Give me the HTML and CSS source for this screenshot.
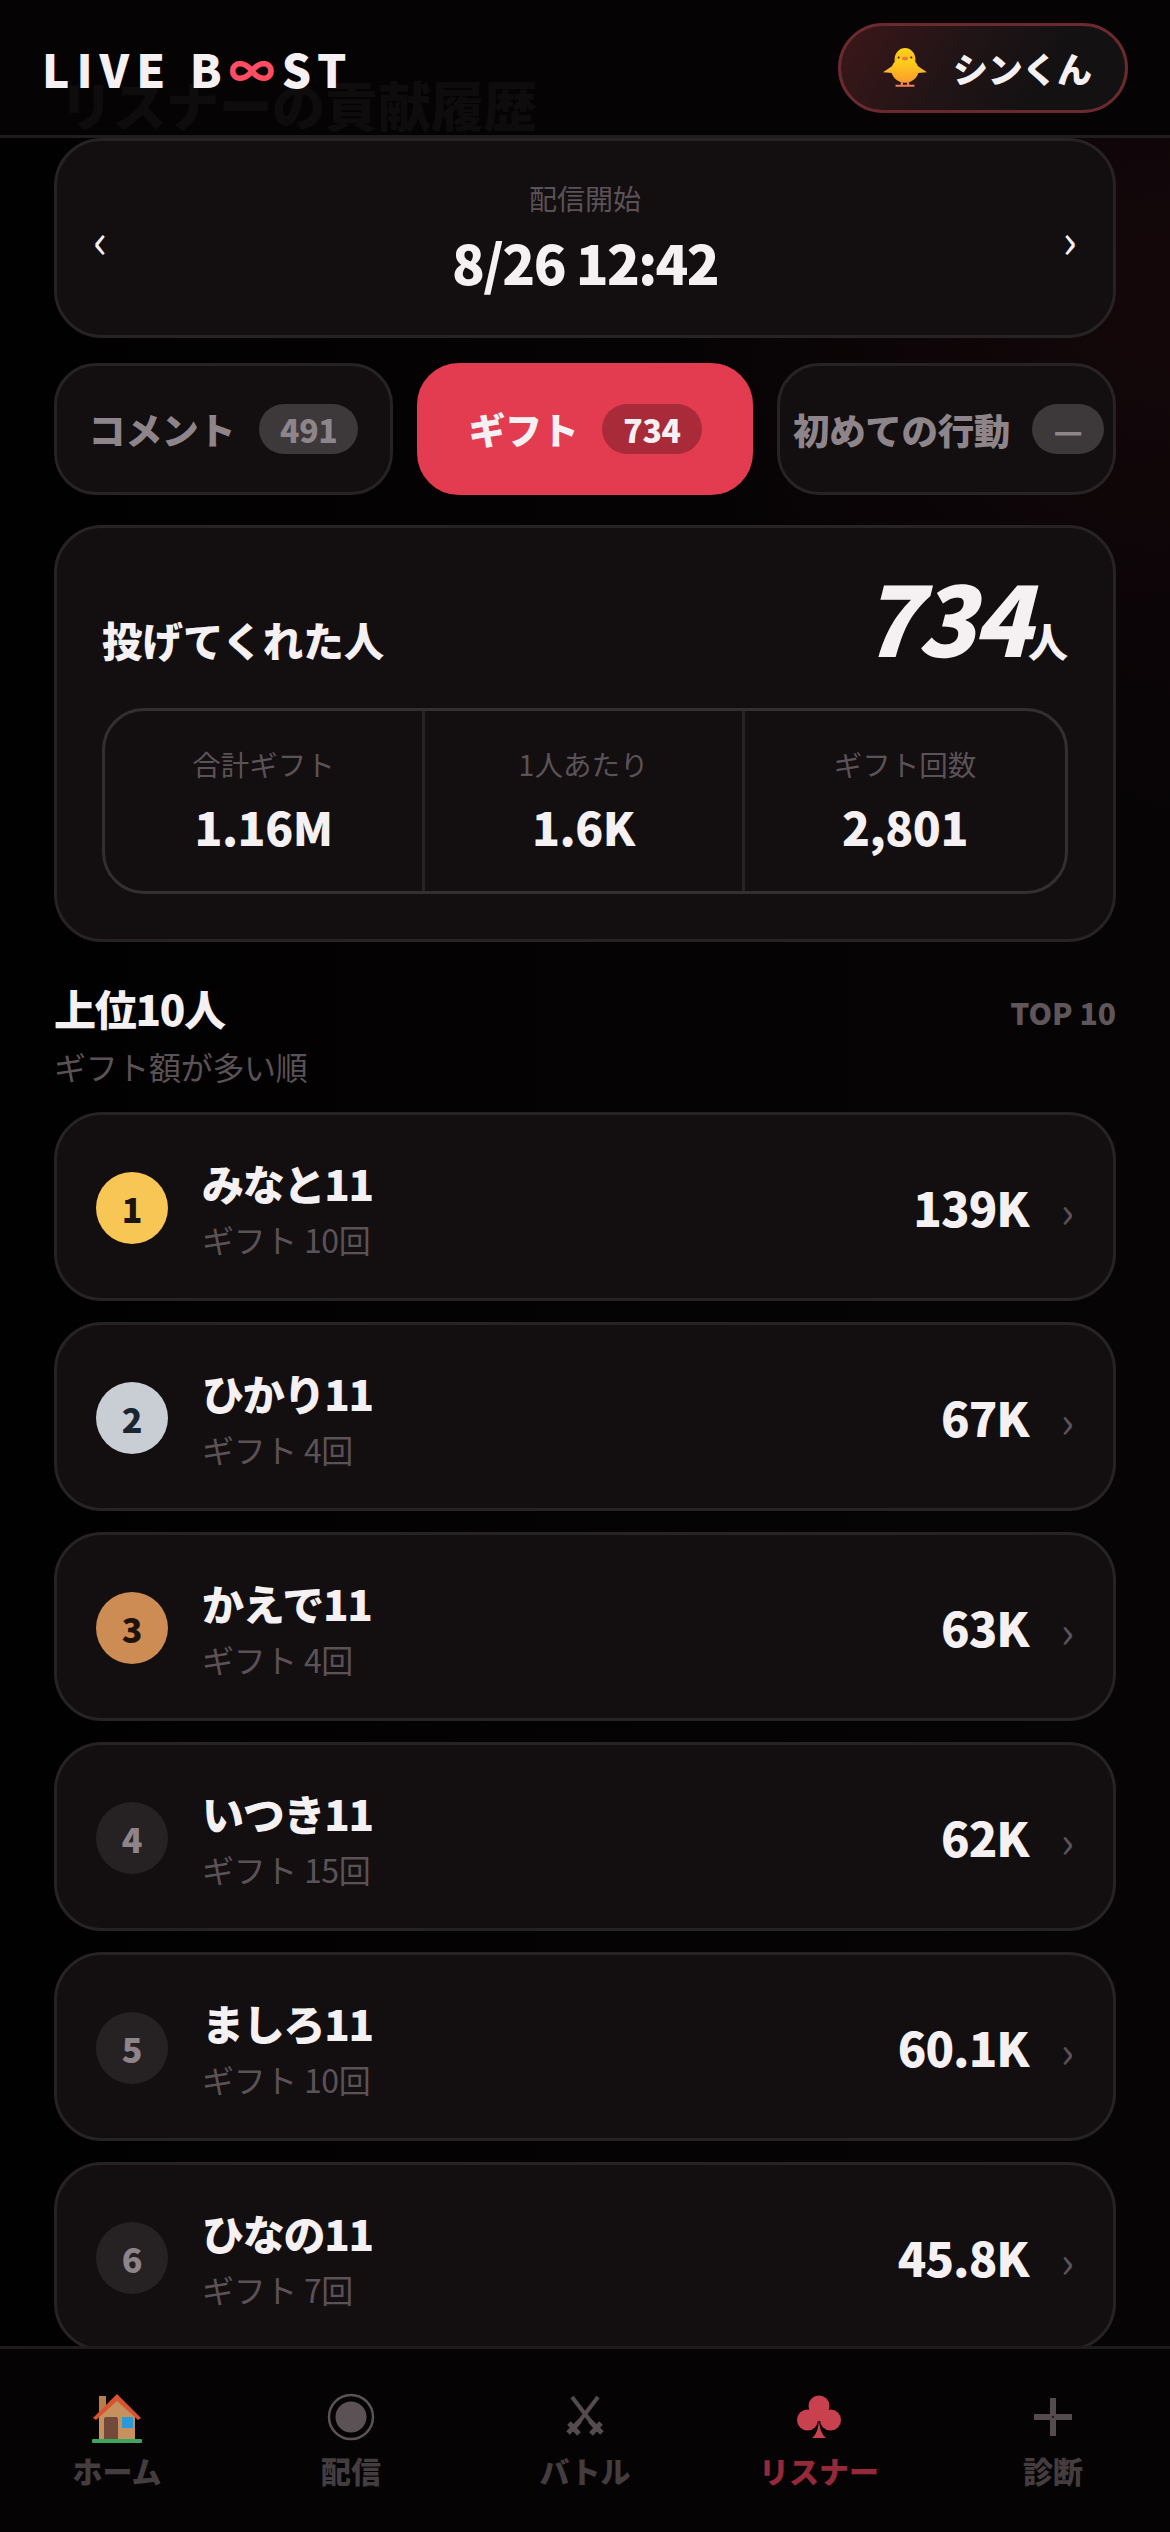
FILE: index.html
```html
<!DOCTYPE html>
<html lang="ja">

<head>
  <meta charset="UTF-8" />
  <meta name="viewport" content="width=device-width, initial-scale=1.0" />
  <title>LIVE BOOST</title>
  <link rel="stylesheet" href="styles.css">
</head>

<body>
  <div class="screen">
    <header class="top-bar">
      <div class="logo">LIVE B<span class="logo-mark">∞</span>ST</div>
      <button class="user-chip">
        <svg class="chick" viewBox="0 0 42 38">
          <defs>
            <linearGradient id="chickBody" x1="0" y1="0" x2="0" y2="1">
              <stop offset="0" stop-color="#fdd915" />
              <stop offset="1" stop-color="#fb9a2c" />
            </linearGradient>
          </defs>
          <path d="M12 15 L0 23 L12 24 Z M30 15 L42 23 L30 24 Z" fill="#f9b933" />
          <ellipse cx="21" cy="11" rx="10" ry="11" fill="url(#chickBody)" />
          <ellipse cx="21" cy="21" rx="13" ry="12" fill="url(#chickBody)" />
          <circle cx="15" cy="9" r="1" fill="#3a2a10" />
          <circle cx="27" cy="9" r="1" fill="#3a2a10" />
          <ellipse cx="21" cy="10" rx="3" ry="1.8" fill="#f4763c" />
          <path d="M17 32 h2 v4 h-2 Z M23 32 h2 v4 h-2 Z M12 35 h18 v2 h-18 Z" fill="#f4805a" />
        </svg>
        <span>シンくん</span>
      </button>
    </header>

    <main class="content">
      <h1 class="page-title">リスナーの貢献履歴</h1>

      <section class="card stream-card">
        <span class="stream-arrow">‹</span>
        <div class="stream-info">
          <div class="stream-label">配信開始</div>
          <div class="stream-time">8/26 12:42</div>
        </div>
        <span class="stream-arrow">›</span>
      </section>

      <div class="tabs">
        <div class="tab">コメント <span class="tab-count">491</span></div>
        <div class="tab tab-active">ギフト <span class="tab-count">734</span></div>
        <div class="tab tab-tight">初めての行動 <span class="tab-count">—</span></div>
      </div>

      <section class="card summary">
        <div class="summary-head">
          <div class="summary-title">投げてくれた人</div>
          <div class="summary-total"><span class="summary-number">734</span>人</div>
        </div>
        <div class="stats">
          <div class="stat">
            <div class="stat-label">合計ギフト</div>
            <div class="stat-value">1.16M</div>
          </div>
          <div class="stat">
            <div class="stat-label">1人あたり</div>
            <div class="stat-value">1.6K</div>
          </div>
          <div class="stat">
            <div class="stat-label">ギフト回数</div>
            <div class="stat-value">2,801</div>
          </div>
        </div>
      </section>

      <div class="section-head">
        <h2>上位10人</h2>
        <span class="section-tag">TOP 10</span>
      </div>
      <p class="section-sub">ギフト額が多い順</p>

      <div class="rank-list">
        <div class="card rank-row">
          <div class="rank rank-gold">1</div>
          <div class="rank-info">
            <div class="rank-name">みなと11</div>
            <div class="rank-sub">ギフト 10回</div>
          </div>
          <div class="rank-value">139K</div>
          <span class="rank-arrow">›</span>
        </div>
        <div class="card rank-row">
          <div class="rank rank-silver">2</div>
          <div class="rank-info">
            <div class="rank-name">ひかり11</div>
            <div class="rank-sub">ギフト 4回</div>
          </div>
          <div class="rank-value">67K</div>
          <span class="rank-arrow">›</span>
        </div>
        <div class="card rank-row">
          <div class="rank rank-bronze">3</div>
          <div class="rank-info">
            <div class="rank-name">かえで11</div>
            <div class="rank-sub">ギフト 4回</div>
          </div>
          <div class="rank-value">63K</div>
          <span class="rank-arrow">›</span>
        </div>
        <div class="card rank-row">
          <div class="rank">4</div>
          <div class="rank-info">
            <div class="rank-name">いつき11</div>
            <div class="rank-sub">ギフト 15回</div>
          </div>
          <div class="rank-value">62K</div>
          <span class="rank-arrow">›</span>
        </div>
        <div class="card rank-row">
          <div class="rank">5</div>
          <div class="rank-info">
            <div class="rank-name">ましろ11</div>
            <div class="rank-sub">ギフト 10回</div>
          </div>
          <div class="rank-value">60.1K</div>
          <span class="rank-arrow">›</span>
        </div>
        <div class="card rank-row">
          <div class="rank">6</div>
          <div class="rank-info">
            <div class="rank-name">ひなの11</div>
            <div class="rank-sub">ギフト 7回</div>
          </div>
          <div class="rank-value">45.8K</div>
          <span class="rank-arrow">›</span>
        </div>
      </div>
    </main>

    <nav class="tab-bar">
      <div class="nav-item">
        <svg class="nav-icon" viewBox="0 0 50 50">
          <path d="M7 21 L25 5 L43 21 V46 H7 Z" fill="#c5925f" />
          <rect x="7" y="3" width="7" height="16" fill="#b67f4a" />
          <path d="M1 25 L25 1 L49 25 L46 27 L25 8 L4 27 Z" fill="#d9532e" />
          <path d="M12 47 V26 q0 -2 2 -2 h10 q2 0 2 2 V47 Z" fill="#72493a" />
          <rect x="30" y="24" width="11" height="11" fill="#2b98d8" />
          <rect x="0" y="46" width="50" height="4" rx="1" fill="#3da55c" />
        </svg>
        <span>ホーム</span>
      </div>
      <div class="nav-item">
        <svg class="nav-icon" viewBox="0 0 50 50">
          <circle cx="25" cy="24" r="22" fill="none" stroke="#5b5256" stroke-width="2.5" />
          <circle cx="25" cy="24" r="15.5" fill="#5b5256" />
        </svg>
        <span>配信</span>
      </div>
      <div class="nav-item">
        <svg class="nav-icon" viewBox="0 0 50 50">
          <path d="M12 4 L38 38 M38 4 L12 38" fill="none" stroke="#544b4f" stroke-width="4" />
          <path d="M8 40 L20 28 M42 40 L30 28 M9 30 L19 41 M41 30 L31 41" fill="none" stroke="#544b4f" stroke-width="5" />
        </svg>
        <span>バトル</span>
      </div>
      <div class="nav-item nav-active">
        <svg class="nav-icon" viewBox="0 0 50 50">
          <circle cx="25" cy="13" r="10.5" fill="#c9404f" />
          <circle cx="13.5" cy="27" r="10.5" fill="#c9404f" />
          <circle cx="36.5" cy="27" r="10.5" fill="#c9404f" />
          <rect x="20" y="12" width="10" height="16" fill="#c9404f" />
          <path d="M25 24 Q25 40 18 45 H32 Q25 40 25 24 Z" fill="#c9404f" />
        </svg>
        <span>リスナー</span>
      </div>
      <div class="nav-item">
        <svg class="nav-icon" viewBox="0 0 50 50">
          <path d="M25 5 V43 M6 24 H44" fill="none" stroke="#544b4f" stroke-width="6" />
          <circle cx="25" cy="24" r="1" fill="#111" />
        </svg>
        <span>診断</span>
      </div>
    </nav>
  </div>
</body>

</html>
```

FILE: styles.css
```css
* {
  box-sizing: border-box;
}

body {
  margin: 0;
  background-color: #050304;
  color: #f5f1f3;
  font-family: "Noto Sans CJK JP", "Noto Sans", sans-serif;
}

.screen {
  position: relative;
  height: 2532px;
  overflow: hidden;
  background:
    radial-gradient(circle at 100% 300px, #14070a 0, rgba(20, 7, 10, 0) 520px),
    linear-gradient(90deg, #020101 0%, #070405 100%);
}

.top-bar {
  position: absolute;
  top: 0;
  left: 0;
  right: 0;
  z-index: 2;
  height: 138px;
  padding: 0 42px 0 42px;
  display: flex;
  align-items: center;
  justify-content: space-between;
  background-color: rgba(5, 3, 4, 0.96);
  border-bottom: 3px solid #211d1f;
}

.logo {
  font-size: 46px;
  font-weight: 900;
  letter-spacing: 7px;
  line-height: 1;
  white-space: nowrap;
}

.logo-mark {
  color: #ff4d61;
}

.user-chip {
  width: 290px;
  height: 90px;
  padding: 0 0 0 42px;
  display: flex;
  align-items: center;
  gap: 26px;
  border: 3px solid #6b2a30;
  border-radius: 45px;
  background: linear-gradient(120deg, #3c1719 0%, #211416 40%, #141113 70%);
  color: #f5f1f3;
  font-family: inherit;
  font-size: 35px;
  font-weight: 900;
  letter-spacing: -0.01em;
}

.chick {
  width: 44px;
  height: 40px;
  flex: none;
}

.content {
  padding: 0 54px;
}

.page-title {
  margin: 68px 0 0;
  padding-left: 6px;
  height: 70px;
  font-size: 53px;
  line-height: 72px;
  font-weight: 900;
  white-space: nowrap;
  color: #d8d4d6;
}

.card {
  background-color: #130e10;
  border: 3px solid #272325;
  border-radius: 48px;
}

.stream-card {
  height: 200px;
  padding: 0 36px;
  display: flex;
  align-items: center;
  justify-content: space-between;
}

.stream-arrow {
  font-size: 48px;
  line-height: 1;
  color: #f5f1f3;
}

.stream-info {
  text-align: center;
}

.stream-label {
  margin-top: 2px;
  font-size: 28px;
  line-height: 40px;
  color: #5b5257;
}

.stream-time {
  margin-top: 6px;
  font-size: 54px;
  line-height: 76px;
  font-weight: 900;
  letter-spacing: -0.03em;
}

.tabs {
  margin-top: 25px;
  display: grid;
  grid-template-columns: 339px 336px 339px;
  gap: 24px;
}

.tab {
  height: 132px;
  display: flex;
  align-items: center;
  justify-content: center;
  gap: 24px;
  background-color: #130e10;
  border: 3px solid #272325;
  border-radius: 42px;
  color: #8d8589;
  font-size: 37px;
  font-weight: 900;
  letter-spacing: -0.01em;
  white-space: nowrap;
}

.tab-tight {
  gap: 22px;
  padding-left: 4px;
  font-size: 36.5px;
}

.tab-active {
  background-color: #e33b50;
  border-color: #e33b50;
  color: #f5f1f3;
}

.tab-count {
  min-width: 72px;
  height: 50px;
  padding: 0 21px;
  display: flex;
  align-items: center;
  justify-content: center;
  background-color: #3d383a;
  border-radius: 25px;
  font-size: 32px;
  line-height: 1;
}

.tab-active .tab-count {
  background-color: #a92a39;
}

.summary {
  margin-top: 30px;
  height: 417px;
  padding: 42px 45px 0;
}

.summary-head {
  display: flex;
  align-items: flex-end;
  justify-content: space-between;
  height: 138px;
}

.summary-title {
  font-size: 40.5px;
  line-height: 52px;
  font-weight: 900;
  margin-bottom: 42px;
}

.summary-total {
  font-size: 40px;
  line-height: 52px;
  font-weight: 900;
  margin-bottom: 42px;
}

.summary-number {
  font-size: 96px;
  font-weight: 900;
  font-style: italic;
  line-height: 52px;
  letter-spacing: -0.03em;
}

.stats {
  height: 186px;
  display: grid;
  grid-template-columns: repeat(3, 1fr);
  border: 3px solid #332e30;
  border-radius: 42px;
}

.stat {
  padding-top: 31px;
  text-align: center;
  border-right: 3px solid #272325;
}

.stat:last-child {
  border-right: none;
}

.stat-label {
  font-size: 28.5px;
  line-height: 44px;
  color: #5b5257;
}

.stat-value {
  margin-top: 9px;
  font-size: 46px;
  line-height: 62px;
  font-weight: 900;
  letter-spacing: -0.01em;
}

.section-head {
  margin-top: 35px;
  display: flex;
  align-items: center;
  justify-content: space-between;
}

.section-head h2 {
  margin: 0;
  font-size: 42px;
  line-height: 62px;
  font-weight: 900;
  letter-spacing: -0.03em;
}

.section-tag {
  margin-top: 8px;
  font-size: 30px;
  font-weight: 900;
  color: #5f565a;
}

.section-sub {
  margin: 5px 0 0;
  font-size: 32px;
  line-height: 44px;
  letter-spacing: -0.01em;
  color: #5b5257;
}

.rank-list {
  margin-top: 24px;
  display: flex;
  flex-direction: column;
  gap: 21px;
}

.rank-row {
  height: 189px;
  flex: none;
  padding: 0 39px;
  display: flex;
  align-items: center;
}

.rank {
  width: 72px;
  height: 72px;
  flex: none;
  margin-top: 3px;
  display: flex;
  align-items: center;
  justify-content: center;
  border-radius: 50%;
  background-color: #262223;
  color: #8d8589;
  font-size: 34px;
  font-weight: 900;
}

.rank-gold {
  background-color: #f7c655;
  color: #1b1410;
}

.rank-silver {
  background-color: #c8ced4;
  color: #1b2530;
}

.rank-bronze {
  background-color: #cd8c54;
  color: #1f120b;
}

.rank-info {
  margin-left: 34px;
  margin-top: 3px;
  flex: 1;
}

.rank-name {
  font-size: 42px;
  line-height: 54px;
  font-weight: 900;
  letter-spacing: -0.03em;
}

.rank-sub {
  margin-top: 7px;
  font-size: 32px;
  line-height: 44px;
  letter-spacing: -0.01em;
  color: #5b5257;
}

.rank-value {
  font-size: 47px;
  font-weight: 900;
  letter-spacing: -0.02em;
}

.rank-arrow {
  margin-left: 32px;
  margin-top: 4px;
  font-size: 44px;
  line-height: 1;
  color: #5b5257;
}

.tab-bar {
  position: absolute;
  left: 0;
  right: 0;
  bottom: 0;
  z-index: 2;
  height: 186px;
  padding-top: 44px;
  display: grid;
  grid-template-columns: repeat(5, 1fr);
  background-color: #050304;
  border-top: 3px solid #1f1b1d;
}

.nav-item {
  display: flex;
  flex-direction: column;
  align-items: center;
  color: #433d40;
  font-size: 30px;
  font-weight: 900;
  line-height: 44px;
}

.nav-item span {
  margin-top: 5px;
}

.nav-icon {
  width: 50px;
  height: 50px;
  display: block;
}

.nav-active {
  color: #94293a;
}
```
